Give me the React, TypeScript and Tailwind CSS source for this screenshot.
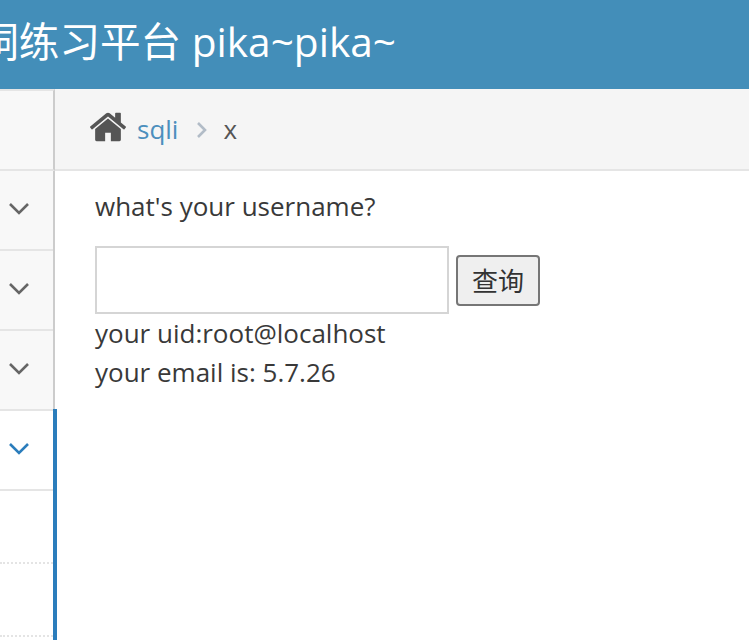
import React from 'react';

const font = "font-['Open_Sans','Noto_Sans_CJK_SC',sans-serif]";

const Chevron = ({ className }: { className: string }) => (
  <svg viewBox="0 0 20 12" fill="none" stroke="currentColor" strokeWidth="2.6" className={className}>
    <path d="M1 1l9 9 9-9" />
  </svg>
);

const HomeIcon = ({ className }: { className: string }) => (
  <svg viewBox="0 0 1792 1792" fill="currentColor" className={className}>
    <path d="M1472 992v480q0 26-19 45t-45 19h-384v-384h-256v384h-384q-26 0-45-19t-19-45v-480q0-1 .5-3t.5-3l575-474 575 474q1 2 1 6zm223-69l-62 74q-8 9-21 11h-3q-13 0-21-7l-692-577-692 577q-12 8-24 7-13-2-21-11l-62-74q-8-10-7-23.500t11-21.500l719-599q32-26 76-26t76 26l244 204v-195q0-14 9-23t23-9h192q14 0 23 9t9 23v408l219 182q10 8 11 21.500t-7 23.500z" />
  </svg>
);

const MenuRow = ({ active }: { active?: boolean }) => (
  <div className={`h-20 flex items-center pl-[9px] pb-[2px] border-b-2 border-[#e5e5e5] ${active ? 'bg-white' : 'bg-[#f8f8f8]'}`}>
    <Chevron className={`w-5 h-3 ${active ? 'text-[#2b7dbc]' : 'text-[#666666]'}`} />
  </div>
);

const App: React.FC = () => {
  return (
    <div className={`w-[749px] h-[640px] overflow-hidden bg-white flex flex-col ${font}`}>
      <header className="h-[89px] shrink-0 bg-[#438eb9]">
        <div className="w-[396px] h-full flex items-center justify-end overflow-hidden pb-[4px]">
          <span className="whitespace-nowrap text-white text-[40.6px] leading-none">漏洞练习平台 pika~pika~</span>
        </div>
      </header>

      <div className="flex-1 flex min-h-0">
        <aside className="w-[55px] shrink-0 flex flex-col">
          <div className="h-[82px] shrink-0 border-t-2 border-b-2 border-[#e5e5e5] bg-[#f8f8f8] border-r-2 border-r-[#cccccc]" />
          <div className="border-r-2 border-[#cccccc] w-[55px]">
            <MenuRow />
            <MenuRow />
            <MenuRow />
          </div>
          <div className="flex-1 w-[57px] -mt-[2px] border-r-4 border-[#2b7dbc] bg-white">
            <div className="h-[2px] bg-[#e5e5e5]" />
            <MenuRow active />
            <div className="h-[73px] border-b-2 border-dotted border-[#e4e4e4]" />
            <div className="h-[73px] border-b-2 border-dotted border-[#e4e4e4]" />
          </div>
        </aside>

        <main className="flex-1 min-w-0">
          <nav className="h-[82px] bg-[#f5f5f5] border-b-2 border-[#e5e5e5] flex items-center pl-[33px] text-[26px]">
            <HomeIcon className="w-[40px] h-[40px] text-[#555555] mb-[5px]" />
            <a className="ml-[9px] text-[#4c8fbd]">sqli</a>
            <svg viewBox="0 0 10 16" fill="none" stroke="#b2bcc7" strokeWidth="2.6" className="ml-[19px] w-[10px] h-4 mt-[2px]">
              <path d="M1 1l7 7-7 7" />
            </svg>
            <span className="ml-[16px] text-[#555555]">x</span>
          </nav>

          <div className="pl-[40px] pt-[16px] text-[26px] leading-[39px] text-[#393939]">
            <p>what's your username?</p>
            <form className="mt-[20px] flex items-center h-[68px]">
              <input type="text" className="w-[354px] h-[68px] border-2 border-[#d5d5d5] bg-white" />
              <button type="button" className="ml-[7px] mt-[1px] w-[84px] h-[51px] bg-[#efefef] border-2 border-[#767676] rounded-[4px] text-[#333333] text-[26px] leading-none">查询</button>
            </form>
            <p>your uid:root@localhost</p>
            <p>your email is: 5.7.26</p>
          </div>
        </main>
      </div>
    </div>
  );
};

export default App;
